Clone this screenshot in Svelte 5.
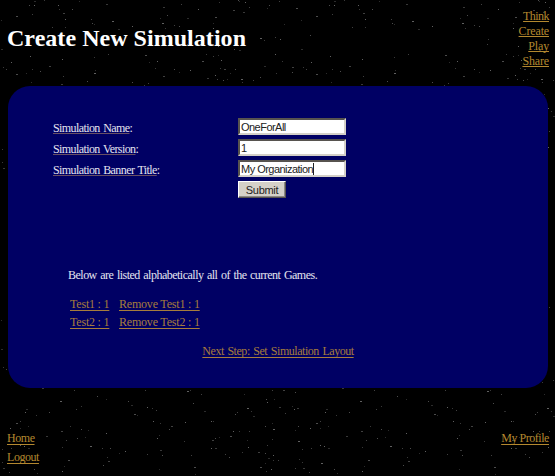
<script>
  let name = $state('OneForAll');
  let version = $state('1');
  let banner = $state('My Organization');
  const games = ['Test1 : 1', 'Test2 : 1'];

  // Star coordinates of the repeating 300px sky tile, in thirds of a pixel.
  const sky = [
    [87,16],[102,4],[102,16],[133,1],[97,43],[48,48],[3,61],[176,16],[177,28],[190,39],[217,28],[237,4],[197,58],[318,14],[275,58],[276,69],[282,72],[336,64],[195,82],[156,82],[30,105],[3,148],[34,187],[10,203],[19,208],[50,223],[79,220],[91,169],[98,208],[149,200],[120,213],[95,246],[187,178],[183,254],[191,229],[262,244],[286,210],[282,219],[284,172],[325,163],[398,246],[355,88],[396,79],[433,255],[446,250],[436,166],[447,187],[471,184],[465,206],[491,229],[522,207],[538,217],[572,211],[489,21],[545,12],[502,46],[481,55],[486,70],[495,85],[522,76],[537,78],[561,55],[595,28],[565,118],[561,133],[647,52],[641,70],[640,85],[658,7],[701,31],[715,2],[718,4],[735,7],[730,37],[748,22],[808,16],[802,25],[781,114],[793,120],[826,111],[703,149],[718,150],[656,139],[619,163],[641,168],[607,183],[655,165],[663,180],[662,204],[673,208],[707,208],[691,220],[645,226],[621,234],[653,238],[669,240],[682,237],[723,238],[727,247],[760,241],[781,232],[793,199],[825,163],[830,220],[837,4],[888,25],[853,73],[842,118],[847,183],[877,202],[878,217],
    [62,384],[73,439]
  ];
  const lower = [
    [127,85],[223,91],[293,108],[318,118],[181,124],[244,138],[230,148],[147,157],[79,148],[77,156],[109,166],[60,183],[50,191],[86,198],[30,205],[212,200],[183,214],[244,209],[264,211],[320,220],[138,229],[199,241],[232,236],[255,232],[271,259],[187,261],[307,265],[331,264],[85,264],[61,256],[7,269],[33,265],[205,301],[192,319],[187,334],[322,291],[325,303],[311,315],[358,280],[376,274],[11,324],[28,336],[104,327],[111,340],[64,310],[6,306],[437,92],[385,124],[393,135],[443,143],[457,144],[469,151],[402,162],[411,166],[460,184],[480,191],[514,200],[507,209],[478,226],[473,234],[482,271],[443,283],[487,286],[478,328],[561,94],[570,91],[604,103],[581,130],[613,153],[556,187],[554,244],[574,286],[583,321],[586,343],[633,184],[641,183],[638,240],[647,236],[658,232],[635,265],[645,265],[676,283],[687,292],[734,103],[741,144],[754,153],[711,156],[706,163],[759,169],[700,214],[717,214],[747,213],[691,229],[742,240],[745,262],[727,277],[774,277],[798,117],[824,118],[802,128],[837,142],[816,91],[795,198],[817,190],[820,208],[816,237],[801,256],[795,280],[804,294],[820,286],[820,300],[835,301],[781,321],[795,310],[813,327],[798,334],[851,91],[885,97],[876,139],[883,147],[893,144],[856,160],[896,198],[885,210],[894,243],[897,297],[885,325]
  ];
  const stars = [
    ...sky.map(([x, y]) => [Math.floor(x / 3), Math.floor(y / 3)]),
    ...lower.map(([x, y]) => [Math.floor(x / 3), Math.floor(y / 3) + 60])
  ];
  const shades = ['#4c4c4c', '#2c2c2c', '#606060', '#383838', '#404040'];
</script>

<div class="page">
  <svg class="sky" width="555" height="476" aria-hidden="true">
    <defs>
      <pattern id="stars" width="300" height="300" patternUnits="userSpaceOnUse">
        {#each stars as [x, y], i}
          <rect {x} {y} width={i % 4 === 1 ? 2 : 1} height="1" fill={shades[i % 5]} />
        {/each}
      </pattern>
    </defs>
    <rect width="555" height="476" fill="url(#stars)" />
  </svg>

  <header>
    <h1>Create New Simulation</h1>
    <nav>
      <a class="tight" href="#think">Think</a>
      <a href="#create">Create</a>
      <a href="#play">Play</a>
      <a href="#share">Share</a>
    </nav>
  </header>

  <main>
    <form onsubmit={(e) => e.preventDefault()}>
      <label for="name"><u>Simulation Name</u>:</label>
      <input id="name" bind:value={name} />
      <label for="version"><u>Simulation Version</u>:</label>
      <input id="version" bind:value={version} />
      <label for="banner"><u>Simulation Banner Title</u>:</label>
      <div class="field"><input id="banner" bind:value={banner} /><i class="caret"></i></div>
      <span></span>
      <button>Submit</button>
    </form>
    <p>Below are listed alphabetically all of the current Games.</p>
    <div class="games">
      {#each games as game}
        <a href="#edit">{game}</a>
        <a href="#remove">Remove {game}</a>
      {/each}
    </div>
    <a class="next" href="#layout">Next Step: Set Simulation Layout</a>
  </main>

  <footer>
    <div><a href="#home">Home</a><a href="#logout">Logout</a></div>
    <a href="#profile">My Profile</a>
  </footer>
</div>

<style>
  :global(body) { margin: 0; background: #000; }
  .page {
    position: relative;
    width: 555px;
    height: 476px;
    overflow: hidden;
    background: #000;
    color: #e4e4f0;
    font: 12px/15px "Liberation Serif", "Times New Roman", serif;
  }
  .sky { position: absolute; inset: 0; }
  header, main, footer { position: relative; }
  a { color: #b4882f; text-decoration: underline; text-underline-offset: 2px; text-decoration-thickness: 1px; text-decoration-skip-ink: none; }
  header { display: flex; justify-content: space-between; height: 86px; padding: 0 6px 0 7px; box-sizing: border-box; }
  h1 { margin: 23px 0 0; color: #fff; font-size: 24px; line-height: 30px; font-weight: bold; white-space: nowrap; letter-spacing: 0.04px; }
  nav { display: flex; flex-direction: column; align-items: flex-end; padding-top: 9px; letter-spacing: -0.15px; }
  nav a { text-underline-offset: 1px; }
  .tight { letter-spacing: -0.55px; }
  main { width: 540px; height: 302px; margin-left: 8px; padding-top: 32px; box-sizing: border-box; border-radius: 22px; background: #000064; }
  form { display: grid; grid-template-columns: 185px 108px; grid-auto-rows: 18px; row-gap: 3px; margin-left: 45px; }
  label { line-height: 20px; white-space: nowrap; letter-spacing: -0.59px; word-spacing: 1px; }
  u { text-decoration-color: #695064; text-decoration-thickness: 1px; text-underline-offset: 1px; text-decoration-skip-ink: none; }
  input { display: block; width: 108px; height: 17px; box-sizing: border-box; margin: 0; padding: 0 1px; border: 2px solid; border-color: #57534f #d4d0c8 #d4d0c8 #57534f; border-radius: 0; background: #fff; color: #222; font: 11px/13px "Liberation Sans", Arial, sans-serif; letter-spacing: -0.53px; outline: none; }
  .field { position: relative; }
  .caret { position: absolute; left: 75px; top: 3px; width: 1px; height: 12px; background: #222; }
  button { width: 48px; height: 17px; padding: 0; border: 1px solid; border-color: #fff #57534f #57534f #fff; box-shadow: inset -1px -1px #8c8984; background: #d4d0c8; color: #222; font: 11px/14px "Liberation Sans", Arial, sans-serif; letter-spacing: -0.3px; }
  p { margin: 69px 0 0 60px; line-height: 15px; letter-spacing: -0.51px; word-spacing: 1px; }
  .games { display: grid; grid-template-columns: 49px max-content; grid-auto-rows: 18px; align-items: center; margin: 12px 0 0 62px; white-space: nowrap; letter-spacing: -0.2px; }
  .games a { color: #a77d3c; }
  .next { display: block; width: max-content; margin: 13px auto 0; color: #a77d3c; letter-spacing: -0.46px; word-spacing: 1px; }
  footer { display: flex; justify-content: space-between; padding: 43px 6px 0 7px; letter-spacing: -0.45px; }
  footer div { display: flex; flex-direction: column; gap: 4px; }
</style>
